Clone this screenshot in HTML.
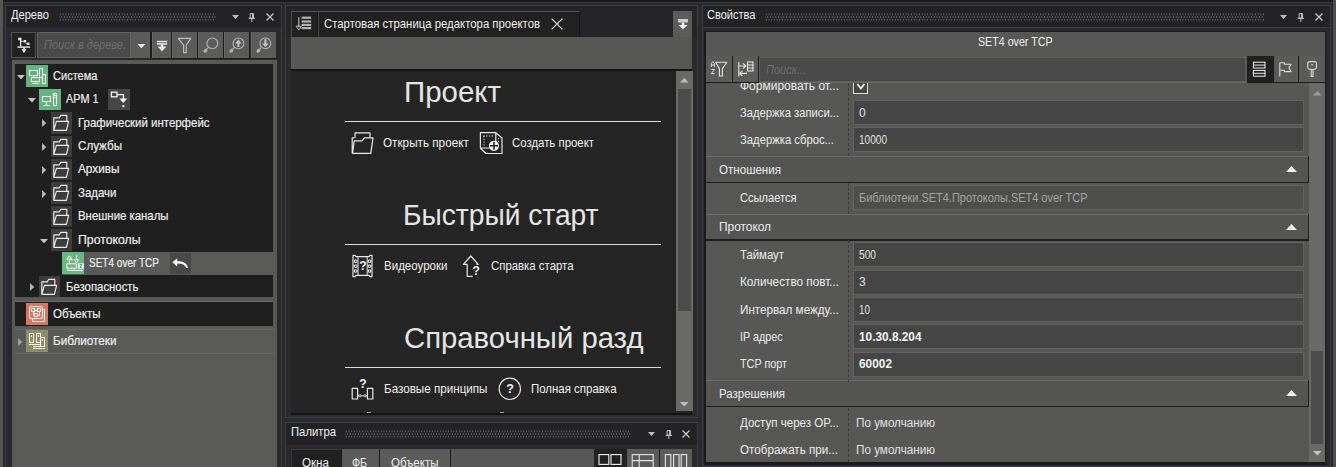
<!DOCTYPE html>
<html lang="ru"><head><meta charset="utf-8"><title>IDE</title>
<style>
html,body{margin:0;padding:0}
body{width:1336px;height:467px;overflow:hidden;background:#2a2a2e;position:relative;font-family:"Liberation Sans", sans-serif}
#r{position:absolute;left:0;top:0;width:1336px;height:467px;overflow:hidden}
#r div,#r span,#r svg{position:absolute;box-sizing:content-box}
.t{white-space:nowrap;font-family:"Liberation Sans", sans-serif;transform-origin:0 50%}
</style></head><body><div id="r">
<div style="left:0px;top:0px;width:1336px;height:2px;background:#1b1b1b;"></div>
<div style="left:0px;top:2px;width:1336px;height:1px;background:#38383e;"></div>
<div style="left:0px;top:0px;width:3px;height:467px;background:#555555;"></div>
<div style="left:1332.5px;top:0px;width:3.5px;height:467px;background:#4e4e4e;"></div>
<div style="left:5px;top:5px;width:275px;height:473px;border:1px solid #3e3e45;background:transparent"></div>
<div style="left:6px;top:6px;width:275px;height:21px;background:#232326;"></div>
<span class="t" style="left:11px;top:6px;font-size:13px;line-height:17px;color:#f0f0f0;font-weight:400;font-style:normal;transform:scaleX(0.8542)">Дерево</span>
<div style="left:59px;top:12.8px;width:157px;height:8px;background-image:radial-gradient(circle,#66666e 0.55px,transparent 0.95px),radial-gradient(circle,#66666e 0.55px,transparent 0.95px);background-size:2.7px 5.4px;background-position:0 -1.4px,1.35px 1.3px"></div>
<svg style="left:232px;top:15px" width="7" height="4" viewBox="0 0 7 4" ><path d="M0 0H7L3.5 4Z" fill="#bcbcbc"/></svg>
<svg style="left:248px;top:12.5px" width="8" height="9" viewBox="0 0 8 9" ><path d="M2.1 0.6H5.5V5.2H2.1Z M0.6 5.4H7 M3.8 5.4V9" stroke="#c4c4c4" stroke-width="1" fill="none"/><path d="M4.8 0.6V5.2" stroke="#c4c4c4" stroke-width="1.4"/></svg>
<svg style="left:266px;top:13px" width="8" height="8" viewBox="0 0 8 8" ><path d="M0.5 0.5L7.5 7.5M7.5 0.5L0.5 7.5" stroke="#c6c6c6" stroke-width="1.25" fill="none"/></svg>
<div style="left:11px;top:32px;width:23px;height:24px;border:1px solid #55554f;background:#222222"></div>
<svg style="left:11px;top:32px" width="25" height="26" viewBox="0 0 25 26" ><g fill="#ececec"><rect x="7.2" y="5.7" width="3.3" height="2.6"/><rect x="9" y="8" width="1.2" height="7"/><rect x="12.7" y="8" width="2.5" height="2.5"/><rect x="16.1" y="10.6" width="2.4" height="2.3"/><rect x="10" y="8.8" width="3" height="0.9"/><rect x="14.6" y="11.3" width="2" height="0.9"/><rect x="6.5" y="14.4" width="12.5" height="1.4"/><rect x="12.2" y="15.6" width="1.6" height="2"/><path d="M10.6 17.2H15.3L12.95 21.2Z"/></g></svg>
<div style="left:37px;top:32px;width:92px;height:24px;border:1px solid #62625e;background:#4a4a4a"></div>
<span class="t" style="left:44px;top:37px;font-size:12px;line-height:16px;color:#6e6e6e;font-weight:400;font-style:italic;transform:scaleX(0.9181)">Поиск в дереве.</span>
<div style="left:131px;top:32px;width:19px;height:26px;background:#5b5b59;"></div>
<svg style="left:137px;top:44px" width="9" height="5" viewBox="0 0 9 5" ><path d="M0.3 0H8.3L4.3 4.2Z" fill="#ececec"/></svg>
<div style="left:150px;top:32px;width:2px;height:26px;background:#1c1c1c;"></div>
<div style="left:152px;top:32px;width:18.5px;height:25.700000000000003px;background:#5b5b59;"></div>
<div style="left:152px;top:32px;width:1px;height:25.700000000000003px;background:#686866;"></div>
<div style="left:172px;top:32px;width:25px;height:25.700000000000003px;background:#5b5b59;"></div>
<div style="left:172px;top:32px;width:1px;height:25.700000000000003px;background:#686866;"></div>
<div style="left:198.3px;top:32px;width:24.69999999999999px;height:25.700000000000003px;background:#5b5b59;"></div>
<div style="left:198.3px;top:32px;width:1.0px;height:25.700000000000003px;background:#686866;"></div>
<div style="left:224.3px;top:32px;width:24.69999999999999px;height:25.700000000000003px;background:#5b5b59;"></div>
<div style="left:224.3px;top:32px;width:1.0px;height:25.700000000000003px;background:#686866;"></div>
<div style="left:250.5px;top:32px;width:25.5px;height:25.700000000000003px;background:#5b5b59;"></div>
<div style="left:250.5px;top:32px;width:1.0px;height:25.700000000000003px;background:#686866;"></div>
<div style="left:152px;top:57.7px;width:124px;height:0.8999999999999986px;background:#1c1c1c;"></div>
<div style="left:170.5px;top:32px;width:1.4000000000000057px;height:26px;background:#1c1c1c;"></div>
<div style="left:197px;top:32px;width:1.4000000000000057px;height:26px;background:#1c1c1c;"></div>
<div style="left:223px;top:32px;width:1.4000000000000057px;height:26px;background:#1c1c1c;"></div>
<div style="left:249px;top:32px;width:1.4000000000000057px;height:26px;background:#1c1c1c;"></div>
<svg style="left:152px;top:32px" width="19" height="26" viewBox="0 0 19 26" ><g fill="#f0f0f0"><rect x="4.8" y="8.8" width="10.4" height="1.5"/><rect x="4.8" y="11.2" width="10.4" height="1.5"/><rect x="8.8" y="12.5" width="2.4" height="2.5"/><path d="M5.6 14.4H14.4L10 19.2Z"/></g></svg>
<svg style="left:172px;top:32px" width="25" height="26" viewBox="0 0 25 26" ><path d="M6.2 6.4H18.8L14.2 13.2V20.6H11.6V13.2Z" fill="none" stroke="#c2c2c2" stroke-width="1.1" stroke-linejoin="round"/></svg>
<svg style="left:198.3px;top:32px" width="25" height="26" viewBox="0 0 25 26" ><g stroke="#b4b4b4" fill="none" stroke-width="1.1"><circle cx="14.4" cy="11.4" r="5.4"/><path d="M10.4 15.4L8 17.8"/></g><ellipse cx="7.4" cy="18.8" rx="2.1" ry="1.7" transform="rotate(-40 7.4 18.8)" fill="#b4b4b4"/></svg>
<svg style="left:224.3px;top:32px" width="25" height="26" viewBox="0 0 25 26" ><g stroke="#b4b4b4" fill="none" stroke-width="1.1"><circle cx="14.4" cy="11.4" r="5.4"/><path d="M10.4 15.4L8 17.8"/></g><ellipse cx="7.4" cy="18.8" rx="2.1" ry="1.7" transform="rotate(-40 7.4 18.8)" fill="#b4b4b4"/><path d="M14.4 7.6L17.6 11.4H15.4V15H13.4V11.4H11.2Z" fill="#c6c6c6"/></svg>
<svg style="left:250.5px;top:32px" width="25" height="26" viewBox="0 0 25 26" ><g stroke="#b4b4b4" fill="none" stroke-width="1.1"><circle cx="14.4" cy="11.4" r="5.4"/><path d="M10.4 15.4L8 17.8"/></g><ellipse cx="7.4" cy="18.8" rx="2.1" ry="1.7" transform="rotate(-40 7.4 18.8)" fill="#b4b4b4"/><path d="M14.4 15.2L17.6 11.4H15.4V7.2H13.4V11.4H11.2Z" fill="#c6c6c6"/></svg>
<div style="left:11.6px;top:60px;width:265.4px;height:407px;background:#595957;"></div>
<div style="left:14.8px;top:64px;width:258.2px;height:233px;background:#1f1f1f;"></div>
<svg style="left:16.5px;top:75px" width="8" height="4.4" viewBox="0 0 8 4.4" ><path d="M0 0H8L4 4.4Z" fill="#c4c4c4"/></svg>
<div style="left:26px;top:65px;width:22.200000000000003px;height:22px;background:#62b57e;"></div>
<svg style="left:26px;top:65px" width="22" height="22" viewBox="0 0 22 22" ><g stroke="#f4f4f4" fill="none" stroke-width="1" shape-rendering="crispEdges"><rect x="3.5" y="5.5" width="8" height="5"/><path d="M7.5 10.5V12.5"/><rect x="5.5" y="12.5" width="8" height="4"/><path d="M9.5 16.5V18.5 M6 18.5H13"/><rect x="13.5" y="3.5" width="3" height="9"/><rect x="16.5" y="9.5" width="3" height="9"/></g></svg>
<span class="t" style="left:52.5px;top:67px;font-size:13px;line-height:17px;color:#f0f0f0;font-weight:400;font-style:normal;transform:scaleX(0.8499);-webkit-text-stroke:0.18px #f0f0f0">Система</span>
<svg style="left:28.3px;top:98.4px" width="8" height="4.4" viewBox="0 0 8 4.4" ><path d="M0 0H8L4 4.4Z" fill="#c4c4c4"/></svg>
<div style="left:39.2px;top:88.8px;width:21.599999999999994px;height:21.200000000000003px;background:#62b57e;"></div>
<svg style="left:39px;top:89px" width="22" height="22" viewBox="0 0 22 22" ><g stroke="#f4f4f4" fill="none" stroke-width="1" shape-rendering="crispEdges"><rect x="3.5" y="7.5" width="8" height="5"/><path d="M7.5 12.5V16.5 M4 16.5H11"/><rect x="14.5" y="4.5" width="3" height="12"/><path d="M15 6.5H17 M15 8.5H17"/></g></svg>
<span class="t" style="left:65.5px;top:90px;font-size:13px;line-height:17px;color:#f0f0f0;font-weight:400;font-style:normal;transform:scaleX(0.836);-webkit-text-stroke:0.18px #f0f0f0">АРМ 1</span>
<div style="left:108px;top:89px;width:22px;height:20.700000000000003px;background:#464646;"></div>
<svg style="left:108px;top:89px" width="22" height="21" viewBox="0 0 22 21" ><g fill="none" stroke="#f4f4f4" stroke-width="1.3"><rect x="3.4" y="3.2" width="5.6" height="4.6"/><path d="M9 5.6H15.4V10"/></g><path d="M11.4 9.6H19.2L15.3 14Z" fill="#f4f4f4"/><rect x="14.3" y="16.2" width="2" height="2" fill="#f4f4f4"/></svg>
<svg style="left:42px;top:119.3px" width="4.4" height="8" viewBox="0 0 4.4 8" ><path d="M0 0L4.4 4L0 8Z" fill="#b4b4b4"/></svg>
<div style="left:51px;top:112.1px;width:21px;height:21.5px;background:#3d3d3d;"></div>
<svg style="left:51px;top:112.1px" width="21" height="21.5" viewBox="0 0 21 21.5" ><path d="M2.8 18.3V5.8H8.4L9.6 3.4H15.8V9.2 M2.8 18.3L5.4 9.3H17.6L15.4 18.3Z" fill="none" stroke="#ececec" stroke-width="1.15" stroke-linejoin="round"/></svg>
<span class="t" style="left:77.5px;top:114px;font-size:13px;line-height:17px;color:#f0f0f0;font-weight:400;font-style:normal;transform:scaleX(0.8799);-webkit-text-stroke:0.18px #f0f0f0">Графический интерфейс</span>
<svg style="left:42px;top:142.72px" width="4.4" height="8" viewBox="0 0 4.4 8" ><path d="M0 0L4.4 4L0 8Z" fill="#b4b4b4"/></svg>
<div style="left:51px;top:135.52px;width:21px;height:21.5px;background:#3d3d3d;"></div>
<svg style="left:51px;top:135.52px" width="21" height="21.5" viewBox="0 0 21 21.5" ><path d="M2.8 18.3V5.8H8.4L9.6 3.4H15.8V9.2 M2.8 18.3L5.4 9.3H17.6L15.4 18.3Z" fill="none" stroke="#ececec" stroke-width="1.15" stroke-linejoin="round"/></svg>
<span class="t" style="left:77.5px;top:137px;font-size:13px;line-height:17px;color:#f0f0f0;font-weight:400;font-style:normal;transform:scaleX(0.8931);-webkit-text-stroke:0.18px #f0f0f0">Службы</span>
<svg style="left:42px;top:166.14px" width="4.4" height="8" viewBox="0 0 4.4 8" ><path d="M0 0L4.4 4L0 8Z" fill="#b4b4b4"/></svg>
<div style="left:51px;top:158.94px;width:21px;height:21.5px;background:#3d3d3d;"></div>
<svg style="left:51px;top:158.94px" width="21" height="21.5" viewBox="0 0 21 21.5" ><path d="M2.8 18.3V5.8H8.4L9.6 3.4H15.8V9.2 M2.8 18.3L5.4 9.3H17.6L15.4 18.3Z" fill="none" stroke="#ececec" stroke-width="1.15" stroke-linejoin="round"/></svg>
<span class="t" style="left:77.5px;top:160px;font-size:13px;line-height:17px;color:#f0f0f0;font-weight:400;font-style:normal;transform:scaleX(0.9065);-webkit-text-stroke:0.18px #f0f0f0">Архивы</span>
<svg style="left:42px;top:189.56px" width="4.4" height="8" viewBox="0 0 4.4 8" ><path d="M0 0L4.4 4L0 8Z" fill="#b4b4b4"/></svg>
<div style="left:51px;top:182.36px;width:21px;height:21.5px;background:#3d3d3d;"></div>
<svg style="left:51px;top:182.36px" width="21" height="21.5" viewBox="0 0 21 21.5" ><path d="M2.8 18.3V5.8H8.4L9.6 3.4H15.8V9.2 M2.8 18.3L5.4 9.3H17.6L15.4 18.3Z" fill="none" stroke="#ececec" stroke-width="1.15" stroke-linejoin="round"/></svg>
<span class="t" style="left:77.5px;top:184px;font-size:13px;line-height:17px;color:#f0f0f0;font-weight:400;font-style:normal;transform:scaleX(0.8819);-webkit-text-stroke:0.18px #f0f0f0">Задачи</span>
<div style="left:51px;top:205.78000000000003px;width:21px;height:21.5px;background:#3d3d3d;"></div>
<svg style="left:51px;top:205.78000000000003px" width="21" height="21.5" viewBox="0 0 21 21.5" ><path d="M2.8 18.3V5.8H8.4L9.6 3.4H15.8V9.2 M2.8 18.3L5.4 9.3H17.6L15.4 18.3Z" fill="none" stroke="#ececec" stroke-width="1.15" stroke-linejoin="round"/></svg>
<span class="t" style="left:77.5px;top:207px;font-size:13px;line-height:17px;color:#f0f0f0;font-weight:400;font-style:normal;transform:scaleX(0.8757);-webkit-text-stroke:0.18px #f0f0f0">Внешние каналы</span>
<svg style="left:40.4px;top:238.9px" width="8" height="4.4" viewBox="0 0 8 4.4" ><path d="M0 0H8L4 4.4Z" fill="#c4c4c4"/></svg>
<div style="left:51px;top:229.20000000000002px;width:21px;height:21.5px;background:#3d3d3d;"></div>
<svg style="left:51px;top:229.20000000000002px" width="21" height="21.5" viewBox="0 0 21 21.5" ><path d="M2.8 18.3V5.8H8.4L9.6 3.4H15.8V9.2 M2.8 18.3L5.4 9.3H17.6L15.4 18.3Z" fill="none" stroke="#ececec" stroke-width="1.15" stroke-linejoin="round"/></svg>
<span class="t" style="left:77.5px;top:231px;font-size:13px;line-height:17px;color:#f0f0f0;font-weight:400;font-style:normal;transform:scaleX(0.9432);-webkit-text-stroke:0.18px #f0f0f0">Протоколы</span>
<div style="left:62px;top:252px;width:211px;height:22.69999999999999px;background:#5a5a58;"></div>
<div style="left:62px;top:252.2px;width:22px;height:22.0px;background:#68b984;"></div>
<svg style="left:62px;top:252.2px" width="22" height="22" viewBox="0 0 22 22" ><g stroke="#f4f4f4" fill="none" stroke-width="1"><path d="M4.8 7.2L7.4 3.8L10 7.2Z M7.4 7.2V11.5"/><path d="M14.6 3.4V7.8 M12.6 7.8H16.6L14.6 11Z"/><path d="M8.4 7.8H12.4" stroke-dasharray="1 1"/><path d="M4.8 11.8H14.4V16.2H4.8Z M6 16.2V17.8 M9 16.2V17.8 M12 16.2V17.8"/><path d="M5 18.5H21"/></g><rect x="16" y="11.4" width="6" height="5.4" fill="#f4f4f4"/><path d="M17.6 12.6H20L17.8 15.4H20.2" stroke="#4a8a62" fill="none" stroke-width="0.9"/></svg>
<span class="t" style="left:89px;top:254px;font-size:13px;line-height:17px;color:#f0f0f0;font-weight:400;font-style:normal;transform:scaleX(0.771);-webkit-text-stroke:0.18px #f0f0f0">SET4 over TCP</span>
<div style="left:170px;top:253px;width:21px;height:20.69999999999999px;background:#484848;"></div>
<svg style="left:170px;top:253px" width="21" height="21" viewBox="0 0 21 21" ><path d="M2.4 9.3L7.2 5.2V8.2C12.5 8 16.6 9.4 18.2 15H16.2C15 11.8 12 10.5 7.2 10.6V13.4Z" fill="#f6f6f6"/></svg>
<svg style="left:30px;top:283.2px" width="4.4" height="8" viewBox="0 0 4.4 8" ><path d="M0 0L4.4 4L0 8Z" fill="#b4b4b4"/></svg>
<div style="left:39.2px;top:276.0px;width:21.299999999999997px;height:20.69999999999999px;background:#3d3d3d;"></div>
<svg style="left:39.2px;top:276.0px" width="21" height="21.5" viewBox="0 0 21 21.5" ><path d="M2.8 18.3V5.8H8.4L9.6 3.4H15.8V9.2 M2.8 18.3L5.4 9.3H17.6L15.4 18.3Z" fill="none" stroke="#ececec" stroke-width="1.15" stroke-linejoin="round"/></svg>
<span class="t" style="left:65.5px;top:278px;font-size:13px;line-height:17px;color:#f0f0f0;font-weight:400;font-style:normal;transform:scaleX(0.8742);-webkit-text-stroke:0.18px #f0f0f0">Безопасность</span>
<div style="left:14.5px;top:301px;width:258.5px;height:1px;background:#6b6b69;"></div>
<div style="left:14.5px;top:302px;width:258.5px;height:23.5px;background:#1f1f1f;"></div>
<div style="left:26px;top:303px;width:22.200000000000003px;height:21.600000000000023px;background:#db7563;"></div>
<svg style="left:26px;top:303px" width="22" height="22" viewBox="0 0 22 22" ><g stroke="#f4f4f4" fill="none" stroke-width="1"><rect x="3.5" y="3.5" width="13" height="12" rx="1.5"/><path d="M16.5 6.5H18.5V18.5H6.5V15.5"/><g shape-rendering="crispEdges"><rect x="5.5" y="5.5" width="3" height="3"/><rect x="11.5" y="5.5" width="3" height="3"/><rect x="8.5" y="10.5" width="3" height="3"/><path d="M8.5 7H11.5 M7 8.5V12H8.5 M13 8.5V12H11.5"/></g></g></svg>
<span class="t" style="left:52.5px;top:305px;font-size:13px;line-height:17px;color:#f0f0f0;font-weight:400;font-style:normal;transform:scaleX(0.8858);-webkit-text-stroke:0.18px #f0f0f0">Объекты</span>
<div style="left:14.5px;top:329px;width:258.5px;height:1px;background:#6b6b69;"></div>
<div style="left:14.5px;top:353px;width:258.5px;height:1px;background:#6b6b69;"></div>
<svg style="left:18.4px;top:337.6px" width="4.4" height="8" viewBox="0 0 4.4 8" ><path d="M0 0L4.4 4L0 8Z" fill="#9c9c9c"/></svg>
<div style="left:26px;top:330.4px;width:22.200000000000003px;height:21.600000000000023px;background:#8e8f68;"></div>
<svg style="left:26px;top:330px" width="22" height="22" viewBox="0 0 22 22" ><g stroke="#f4f4f4" fill="none" stroke-width="1" shape-rendering="crispEdges"><rect x="3.5" y="3.5" width="4" height="9"/><rect x="10.5" y="3.5" width="4" height="9"/><rect x="14.5" y="7.5" width="4" height="9"/><path d="M5.5 5V7 M12.5 5V7 M16.5 9V11 M3 14.5H14.5 M7 16.5H14.5 M7 18.5H19"/></g></svg>
<span class="t" style="left:52.5px;top:332px;font-size:13px;line-height:17px;color:#f0f0f0;font-weight:400;font-style:normal;transform:scaleX(0.9015);-webkit-text-stroke:0.18px #f0f0f0">Библиотеки</span>
<div style="left:285px;top:5px;width:411px;height:411px;border:1px solid #3e3e45;background:transparent"></div>
<div style="left:286px;top:6px;width:411px;height:31px;background:#252528;"></div>
<div style="left:291px;top:11px;width:24.5px;height:25.5px;background:#212121;border-top:1px solid #555553;border-left:1px solid #4a4a48;border-right:1px solid #161616"></div>
<svg style="left:291px;top:11px" width="26" height="26" viewBox="0 0 26 26" ><g fill="#b4b4b4"><rect x="7.2" y="6.2" width="1.2" height="10"/><path d="M5 15.2H10.6L7.8 19Z" fill="none" stroke="#c2c2c2" stroke-width="1"/><rect x="10.6" y="5.6" width="9.6" height="2.2"/><rect x="10.6" y="9.4" width="9.6" height="2.2"/><rect x="10.6" y="12.8" width="9.6" height="2.2"/><rect x="10.6" y="16" width="9.6" height="2.2"/></g></svg>
<div style="left:317.5px;top:11px;width:260px;height:25.5px;background:#212121;border-top:1px solid #555553;border-left:1px solid #4a4a48;border-right:1px solid #161616"></div>
<span class="t" style="left:324px;top:15px;font-size:13px;line-height:17px;color:#f0f0f0;font-weight:400;font-style:normal;transform:scaleX(0.874)">Стартовая страница редактора проектов</span>
<svg style="left:551px;top:18px" width="12" height="12" viewBox="0 0 12 12" ><path d="M0.6 0.6L11.4 11.4M11.4 0.6L0.6 11.4" stroke="#dcdcdc" stroke-width="1.2" fill="none"/></svg>
<div style="left:673px;top:11px;width:19.299999999999955px;height:26px;background:#5b5b59;"></div>
<svg style="left:673px;top:11px" width="19" height="26" viewBox="0 0 19 26" ><rect x="5" y="8" width="10" height="3.4" fill="#cdcdcd"/><path d="M8.8 11.4H11.4V14H14.6L10.1 18.2L5.6 14H8.8Z" fill="#f4f4f4"/></svg>
<div style="left:291px;top:37px;width:401.29999999999995px;height:32px;background:#575755;"></div>
<div style="left:291px;top:69px;width:401.29999999999995px;height:1.5px;background:#161616;"></div>
<div style="left:291px;top:70.5px;width:401.29999999999995px;height:342.5px;background:#252525;"></div>
<div style="left:676.3px;top:70.7px;width:16.300000000000068px;height:340.8px;background:#6a6a68;"></div>
<div style="left:678.3px;top:89px;width:12.5px;height:222px;background:#4c4c4c;"></div>
<svg style="left:680.3px;top:78.2px" width="8.6" height="4.6" viewBox="0 0 8.6 4.6" ><path d="M0 4.6H8.6L4.3 0Z" fill="#bdbdbd"/></svg>
<svg style="left:680.3px;top:401.5px" width="8.6" height="4.6" viewBox="0 0 8.6 4.6" ><path d="M0 0H8.6L4.3 4.6Z" fill="#bdbdbd"/></svg>
<span class="t" style="left:404px;top:75px;font-size:28.8px;line-height:34px;color:#e6e6e6;font-weight:400;font-style:normal;transform:scaleX(1.0226)">Проект</span>
<div style="left:345px;top:121px;width:316px;height:1px;background:#dcdcdc;"></div>
<svg style="left:350px;top:130px" width="26" height="26" viewBox="0 0 26 26" ><g stroke="#e8e8e8" fill="none" stroke-width="1.2" stroke-linejoin="round"><path d="M5 8V2.8H20V7.6"/><path d="M2.2 23.4V7.8H4.4 M2.2 23.4H20.8L23 7.8H14.6L12 10.8H4.2L2.6 23.2"/></g></svg>
<span class="t" style="left:383.2px;top:134px;font-size:13px;line-height:17px;color:#f0f0f0;font-weight:400;font-style:normal;transform:scaleX(0.9014)">Открыть проект</span>
<svg style="left:478px;top:130px" width="26" height="26" viewBox="0 0 26 26" ><g stroke="#e8e8e8" fill="none" stroke-width="1.2" stroke-linejoin="round"><path d="M2.4 2.6H17.8V18H2.4Z M17.8 2.6L24 8V23.5H7.8L2.4 18"/><path d="M5.4 6H15 M6 6V15.5 M20.6 8V12" stroke-dasharray="1.2 1.6" stroke-width="1"/></g><circle cx="16" cy="15.8" r="5.1" fill="#f2f2f2"/><path d="M16 11.8V19.8M12 15.8H20" stroke="#222" stroke-width="1.5"/></svg>
<span class="t" style="left:511.5px;top:134px;font-size:13px;line-height:17px;color:#f0f0f0;font-weight:400;font-style:normal;transform:scaleX(0.8766)">Создать проект</span>
<span class="t" style="left:403.2px;top:198px;font-size:28.8px;line-height:34px;color:#e6e6e6;font-weight:400;font-style:normal;transform:scaleX(0.9783)">Быстрый старт</span>
<div style="left:345px;top:244px;width:316px;height:1px;background:#dcdcdc;"></div>
<svg style="left:351px;top:253px" width="24" height="26" viewBox="0 0 24 26" ><g stroke="#e8e8e8" fill="none" stroke-width="1.2" stroke-linejoin="round"><path d="M2 2.4H4L5 3.6H18L19 2.4H21V23.6H19L18 22.4H5L4 23.6H2Z"/><path d="M7 3.6V22.4M16.2 3.6V22.4" stroke-width="1"/><g stroke-width="1"><rect x="3.6" y="7" width="2.2" height="2.4"/><rect x="3.6" y="12" width="2.2" height="2.4"/><rect x="3.6" y="16.8" width="2.2" height="2.4"/><rect x="17.4" y="7" width="2.2" height="2.4"/><rect x="17.4" y="12" width="2.2" height="2.4"/><rect x="17.4" y="16.8" width="2.2" height="2.4"/></g></g></svg>
<span class="t" style="left:359.3px;top:257.8px;font-size:12px;line-height:17px;color:#f4f4f4;font-weight:700;font-style:normal;transform:scaleX(1)">?</span>
<span class="t" style="left:384px;top:257px;font-size:13px;line-height:17px;color:#f0f0f0;font-weight:400;font-style:normal;transform:scaleX(0.8868)">Видеоуроки</span>
<svg style="left:461px;top:253px" width="22" height="26" viewBox="0 0 22 26" ><g stroke="#e8e8e8" fill="none" stroke-width="1.2" stroke-linejoin="round"><path d="M11.6 23.4H6.2V11.4H2.4L9.8 3L17.2 11.4H15.4"/></g></svg>
<span class="t" style="left:472.4px;top:262.8px;font-size:12px;line-height:17px;color:#f4f4f4;font-weight:700;font-style:normal;transform:scaleX(1)">?</span>
<span class="t" style="left:491.3px;top:257px;font-size:13px;line-height:17px;color:#f0f0f0;font-weight:400;font-style:normal;transform:scaleX(0.8763)">Справка старта</span>
<span class="t" style="left:403.5px;top:321px;font-size:28.8px;line-height:34px;color:#e6e6e6;font-weight:400;font-style:normal;transform:scaleX(1.0167)">Справочный разд</span>
<div style="left:345px;top:367px;width:316px;height:1px;background:#dcdcdc;"></div>
<svg style="left:350px;top:376px" width="26" height="26" viewBox="0 0 26 26" ><g stroke="#e8e8e8" fill="none" stroke-width="1.2" stroke-linejoin="round"><rect x="2.2" y="12.4" width="5.4" height="10.6"/><rect x="17.4" y="12.4" width="5.4" height="10.6"/><g stroke-width="0.9"><circle cx="10" cy="19.8" r="1.1"/><circle cx="15" cy="19.8" r="1.1"/><path d="M7.6 19.8H8.9 M11.1 19.8H13.9 M16.1 19.8H17.4"/></g></g></svg>
<span class="t" style="left:359.3px;top:376.0px;font-size:12px;line-height:17px;color:#f4f4f4;font-weight:700;font-style:normal;transform:scaleX(1)">?</span>
<span class="t" style="left:384px;top:380px;font-size:13px;line-height:17px;color:#f0f0f0;font-weight:400;font-style:normal;transform:scaleX(0.8956)">Базовые принципы</span>
<svg style="left:498px;top:377.2px" width="24" height="24" viewBox="0 0 24 24" ><circle cx="11.8" cy="11.8" r="10.7" stroke="#dedede" fill="none" stroke-width="1.2"/></svg>
<span class="t" style="left:506.2px;top:380.0px;font-size:12.5px;line-height:18px;color:#f4f4f4;font-weight:700;font-style:normal;transform:scaleX(1)">?</span>
<span class="t" style="left:531px;top:380px;font-size:13px;line-height:17px;color:#f0f0f0;font-weight:400;font-style:normal;transform:scaleX(0.881)">Полная справка</span>
<div style="left:366.8px;top:411.6px;width:4.0px;height:1.0px;background:#a0a0a0;"></div>
<div style="left:500.4px;top:411.6px;width:4.0px;height:1.0px;background:#a0a0a0;"></div>
<div style="left:291px;top:413px;width:401.29999999999995px;height:1.5px;background:#141414;"></div>
<div style="left:285px;top:422px;width:411px;height:56px;border:1px solid #3e3e45;background:transparent"></div>
<div style="left:286px;top:423px;width:411px;height:21.5px;background:#232326;"></div>
<span class="t" style="left:290.5px;top:423px;font-size:13px;line-height:17px;color:#f0f0f0;font-weight:400;font-style:normal;transform:scaleX(0.868)">Палитра</span>
<div style="left:345px;top:430px;width:286px;height:8px;background-image:radial-gradient(circle,#66666e 0.55px,transparent 0.95px),radial-gradient(circle,#66666e 0.55px,transparent 0.95px);background-size:2.7px 5.4px;background-position:0 -1.4px,1.35px 1.3px"></div>
<svg style="left:648px;top:432px" width="7" height="4" viewBox="0 0 7 4" ><path d="M0 0H7L3.5 4Z" fill="#bcbcbc"/></svg>
<svg style="left:664.5px;top:429.5px" width="8" height="9" viewBox="0 0 8 9" ><path d="M2.1 0.6H5.5V5.2H2.1Z M0.6 5.4H7 M3.8 5.4V9" stroke="#c4c4c4" stroke-width="1" fill="none"/><path d="M4.8 0.6V5.2" stroke="#c4c4c4" stroke-width="1.4"/></svg>
<svg style="left:682px;top:430px" width="8" height="8" viewBox="0 0 8 8" ><path d="M0.5 0.5L7.5 7.5M7.5 0.5L0.5 7.5" stroke="#c6c6c6" stroke-width="1.25" fill="none"/></svg>
<div style="left:291px;top:449.3px;width:401.29999999999995px;height:17.69999999999999px;background:#575755;"></div>
<div style="left:291px;top:449.3px;width:49.5px;height:17.69999999999999px;background:#212121;"></div>
<div style="left:291px;top:449.3px;width:49.5px;height:1.0px;background:#3c3c3c;"></div>
<div style="left:291px;top:449.3px;width:1px;height:17.69999999999999px;background:#383838;"></div>
<div style="left:341.3px;top:449.3px;width:37.69999999999999px;height:17.69999999999999px;background:#5b5b59;"></div>
<div style="left:380px;top:449.3px;width:70.30000000000001px;height:17.69999999999999px;background:#5b5b59;"></div>
<div style="left:340.5px;top:449.3px;width:0.8000000000000114px;height:17.69999999999999px;background:#1c1c1c;"></div>
<div style="left:379px;top:449.3px;width:1px;height:17.69999999999999px;background:#1c1c1c;"></div>
<div style="left:450.3px;top:449.3px;width:1.0px;height:17.69999999999999px;background:#1c1c1c;"></div>
<span class="t" style="left:302px;top:454px;font-size:13px;line-height:17px;color:#f0f0f0;font-weight:400;font-style:normal;transform:scaleX(0.8935)">Окна</span>
<span class="t" style="left:352px;top:454px;font-size:13px;line-height:17px;color:#f0f0f0;font-weight:400;font-style:normal;transform:scaleX(0.8142)">ФБ</span>
<span class="t" style="left:391px;top:454px;font-size:13px;line-height:17px;color:#f0f0f0;font-weight:400;font-style:normal;transform:scaleX(0.8858)">Объекты</span>
<div style="left:594.2px;top:449.3px;width:31.799999999999955px;height:17.69999999999999px;background:#212121;"></div>
<svg style="left:594.2px;top:449.3px" width="32" height="18" viewBox="0 0 32 18" ><g stroke="#f2f2f2" fill="none" stroke-width="1.1"><rect x="5" y="5.6" width="9.8" height="9.8"/><rect x="17" y="5.6" width="10" height="9.8"/></g></svg>
<div style="left:626px;top:449.3px;width:1.2999999999999545px;height:17.69999999999999px;background:#1c1c1c;"></div>
<div style="left:627.3px;top:449.3px;width:31.700000000000045px;height:17.69999999999999px;background:#5b5b59;"></div>
<svg style="left:627.3px;top:449.3px" width="32" height="18" viewBox="0 0 32 18" ><g stroke="#e6e6e6" fill="none" stroke-width="1.1"><rect x="5.2" y="5.6" width="21" height="16"/><path d="M5.2 11.6H26.2 M12.2 5.6V20"/></g></svg>
<div style="left:659px;top:449.3px;width:1.2999999999999545px;height:17.69999999999999px;background:#1c1c1c;"></div>
<div style="left:660.3px;top:449.3px;width:32.0px;height:17.69999999999999px;background:#5b5b59;"></div>
<svg style="left:660.3px;top:449.3px" width="32" height="18" viewBox="0 0 32 18" ><g stroke="#e6e6e6" fill="none" stroke-width="1.1"><rect x="5.4" y="5.6" width="5.4" height="16"/><rect x="13.6" y="5.6" width="5.4" height="16"/><rect x="21.2" y="5.6" width="5.4" height="16"/></g></svg>
<div style="left:702px;top:5px;width:626.5999999999999px;height:460px;border:1px solid #3e3e45;background:transparent"></div>
<div style="left:703px;top:6px;width:626.5999999999999px;height:21px;background:#232326;"></div>
<div style="left:703px;top:27px;width:626.5999999999999px;height:1px;background:#3a3a40;"></div>
<span class="t" style="left:707px;top:6px;font-size:13px;line-height:17px;color:#f0f0f0;font-weight:400;font-style:normal;transform:scaleX(0.8495)">Свойства</span>
<div style="left:765px;top:12.8px;width:499px;height:8px;background-image:radial-gradient(circle,#66666e 0.55px,transparent 0.95px),radial-gradient(circle,#66666e 0.55px,transparent 0.95px);background-size:2.7px 5.4px;background-position:0 -1.4px,1.35px 1.3px"></div>
<svg style="left:1280px;top:15px" width="7" height="4" viewBox="0 0 7 4" ><path d="M0 0H7L3.5 4Z" fill="#bcbcbc"/></svg>
<svg style="left:1297px;top:12.5px" width="8" height="9" viewBox="0 0 8 9" ><path d="M2.1 0.6H5.5V5.2H2.1Z M0.6 5.4H7 M3.8 5.4V9" stroke="#c4c4c4" stroke-width="1" fill="none"/><path d="M4.8 0.6V5.2" stroke="#c4c4c4" stroke-width="1.4"/></svg>
<svg style="left:1314.5px;top:13px" width="8" height="8" viewBox="0 0 8 8" ><path d="M0.5 0.5L7.5 7.5M7.5 0.5L0.5 7.5" stroke="#c6c6c6" stroke-width="1.25" fill="none"/></svg>
<div style="left:704px;top:31px;width:622px;height:434px;background:#1b1b1b;"></div>
<div style="left:706.3px;top:32px;width:618.7px;height:430px;background:#575755;"></div>
<span class="t" style="left:740.3px;top:78px;font-size:12px;line-height:16px;color:#ececec;font-weight:400;font-style:normal;transform:scaleX(0.9991)">Формировать от...</span>
<div style="left:852.5px;top:80px;width:13.700000000000045px;height:12px;border:1px solid #e0e0e0;background:#444"></div>
<svg style="left:852.5px;top:80px" width="16" height="14" viewBox="0 0 16 14" ><path d="M4.4 4L7.8 8.6L11.4 4" stroke="#f4f4f4" stroke-width="1.8" fill="none"/></svg>
<span class="t" style="left:740.3px;top:105px;font-size:12px;line-height:16px;color:#ececec;font-weight:400;font-style:normal;transform:scaleX(0.9348)">Задержка записи...</span>
<div style="left:852.5px;top:99.9px;width:449.5px;height:23.0px;border:1px solid #62625f;background:#454545"></div>
<span class="t" style="left:859px;top:105px;font-size:12px;line-height:16px;color:#e2e2e2;font-weight:400;font-style:normal;transform:scaleX(1)">0</span>
<span class="t" style="left:740.3px;top:132px;font-size:12px;line-height:16px;color:#ececec;font-weight:400;font-style:normal;transform:scaleX(0.9396)">Задержка сброс...</span>
<div style="left:852.5px;top:127.30000000000001px;width:449.5px;height:23.0px;border:1px solid #62625f;background:#454545"></div>
<span class="t" style="left:859px;top:132px;font-size:12px;line-height:16px;color:#e2e2e2;font-weight:400;font-style:normal;transform:scaleX(0.839)">10000</span>
<div style="left:706.3px;top:156.4px;width:602.2px;height:27.0px;background:#555553;"></div>
<div style="left:706.3px;top:156.4px;width:602.2px;height:1.0px;background:#6c6c6a;"></div>
<div style="left:706.3px;top:182.1px;width:602.2px;height:1.4000000000000057px;background:#1e1e1e;"></div>
<div style="left:1307.5px;top:156.4px;width:1.0px;height:27.0px;background:#1e1e1e;"></div>
<span class="t" style="left:719px;top:162px;font-size:12px;line-height:16px;color:#ececec;font-weight:400;font-style:normal;transform:scaleX(0.9647)">Отношения</span>
<svg style="left:1286px;top:166.4px" width="11" height="6" viewBox="0 0 11 6" ><path d="M0 6H11L5.5 0Z" fill="#f0f0f0"/></svg>
<span class="t" style="left:740.3px;top:190px;font-size:12px;line-height:16px;color:#ececec;font-weight:400;font-style:normal;transform:scaleX(0.9246)">Ссылается</span>
<div style="left:852.5px;top:184.7px;width:449.5px;height:23.0px;border:1px solid #62625f;background:#4e4e4c"></div>
<span class="t" style="left:859px;top:190px;font-size:12px;line-height:16px;color:#a4a4a4;font-weight:400;font-style:normal;transform:scaleX(0.9139)">Библиотеки.SET4.Протоколы.SET4 over TCP</span>
<div style="left:706.3px;top:213.6px;width:602.2px;height:27.0px;background:#555553;"></div>
<div style="left:706.3px;top:213.6px;width:602.2px;height:1.0px;background:#6c6c6a;"></div>
<div style="left:706.3px;top:239.29999999999998px;width:602.2px;height:1.4000000000000057px;background:#1e1e1e;"></div>
<div style="left:1307.5px;top:213.6px;width:1.0px;height:27.0px;background:#1e1e1e;"></div>
<span class="t" style="left:719px;top:219px;font-size:12px;line-height:16px;color:#ececec;font-weight:400;font-style:normal;transform:scaleX(0.9896)">Протокол</span>
<svg style="left:1286px;top:223.6px" width="11" height="6" viewBox="0 0 11 6" ><path d="M0 6H11L5.5 0Z" fill="#f0f0f0"/></svg>
<span class="t" style="left:740.3px;top:247px;font-size:12px;line-height:16px;color:#ececec;font-weight:400;font-style:normal;transform:scaleX(0.9472)">Таймаут</span>
<div style="left:852.5px;top:242.3px;width:449.5px;height:23.0px;border:1px solid #62625f;background:#454545"></div>
<span class="t" style="left:859px;top:247px;font-size:12px;line-height:16px;color:#e2e2e2;font-weight:400;font-style:normal;transform:scaleX(0.8487)">500</span>
<span class="t" style="left:740.3px;top:274px;font-size:12px;line-height:16px;color:#ececec;font-weight:400;font-style:normal;transform:scaleX(0.9779)">Количество повт...</span>
<div style="left:852.5px;top:269.65px;width:449.5px;height:23.0px;border:1px solid #62625f;background:#454545"></div>
<span class="t" style="left:859px;top:274px;font-size:12px;line-height:16px;color:#e2e2e2;font-weight:400;font-style:normal;transform:scaleX(1)">3</span>
<span class="t" style="left:740.3px;top:302px;font-size:12px;line-height:16px;color:#ececec;font-weight:400;font-style:normal;transform:scaleX(0.9721)">Интервал между...</span>
<div style="left:852.5px;top:297.0px;width:449.5px;height:23.0px;border:1px solid #62625f;background:#454545"></div>
<span class="t" style="left:859px;top:302px;font-size:12px;line-height:16px;color:#e2e2e2;font-weight:400;font-style:normal;transform:scaleX(0.8234)">10</span>
<span class="t" style="left:740.3px;top:329px;font-size:12px;line-height:16px;color:#ececec;font-weight:400;font-style:normal;transform:scaleX(0.8971)">IP адрес</span>
<div style="left:852.5px;top:324.4px;width:449.5px;height:23.0px;border:1px solid #62625f;background:#454545"></div>
<span class="t" style="left:859px;top:329px;font-size:12px;line-height:16px;color:#f4f4f4;font-weight:700;font-style:normal;transform:scaleX(0.9857)">10.30.8.204</span>
<span class="t" style="left:740.3px;top:356px;font-size:12px;line-height:16px;color:#ececec;font-weight:400;font-style:normal;transform:scaleX(0.9003)">TCP порт</span>
<div style="left:852.5px;top:351.75px;width:449.5px;height:23.0px;border:1px solid #62625f;background:#454545"></div>
<span class="t" style="left:859px;top:356px;font-size:12px;line-height:16px;color:#f4f4f4;font-weight:700;font-style:normal;transform:scaleX(0.9888)">60002</span>
<div style="left:706.3px;top:380.3px;width:602.2px;height:27.0px;background:#555553;"></div>
<div style="left:706.3px;top:380.3px;width:602.2px;height:1.0px;background:#6c6c6a;"></div>
<div style="left:706.3px;top:406.0px;width:602.2px;height:1.400000000000034px;background:#1e1e1e;"></div>
<div style="left:1307.5px;top:380.3px;width:1.0px;height:27.0px;background:#1e1e1e;"></div>
<span class="t" style="left:719px;top:386px;font-size:12px;line-height:16px;color:#ececec;font-weight:400;font-style:normal;transform:scaleX(0.9548)">Разрешения</span>
<svg style="left:1286px;top:390.3px" width="11" height="6" viewBox="0 0 11 6" ><path d="M0 6H11L5.5 0Z" fill="#f0f0f0"/></svg>
<span class="t" style="left:740.3px;top:415px;font-size:12px;line-height:16px;color:#ececec;font-weight:400;font-style:normal;transform:scaleX(0.9607)">Доступ через OP...</span>
<span class="t" style="left:856px;top:415px;font-size:12px;line-height:16px;color:#e2e2e2;font-weight:400;font-style:normal;transform:scaleX(0.9734)">По умолчанию</span>
<span class="t" style="left:740.3px;top:442px;font-size:12px;line-height:16px;color:#ececec;font-weight:400;font-style:normal;transform:scaleX(0.9703)">Отображать при...</span>
<span class="t" style="left:856px;top:442px;font-size:12px;line-height:16px;color:#e2e2e2;font-weight:400;font-style:normal;transform:scaleX(0.9734)">По умолчанию</span>
<div style="left:848.2px;top:83px;width:0;height:73px;border-left:1.2px dashed #3c3c3c"></div>
<div style="left:848.2px;top:183px;width:0;height:30.5px;border-left:1.2px dashed #3c3c3c"></div>
<div style="left:848.2px;top:240px;width:0;height:141.5px;border-left:1.2px dashed #3c3c3c"></div>
<div style="left:848.2px;top:408px;width:0;height:54px;border-left:1.2px dashed #3c3c3c"></div>
<div style="left:706.3px;top:32px;width:618.7px;height:50.599999999999994px;background:#575755;"></div>
<div style="left:706.3px;top:82px;width:602.2px;height:1px;background:#6a6a68;"></div>
<span class="t" style="left:978.3px;top:34px;font-size:12px;line-height:16px;color:#f0f0f0;font-weight:400;font-style:normal;transform:scaleX(0.8889)">SET4 over TCP</span>
<div style="left:706.3px;top:56.4px;width:25.700000000000045px;height:25.6px;background:#5b5b59;"></div>
<div style="left:732px;top:56.4px;width:1.2000000000000455px;height:25.6px;background:#1c1c1c;"></div>
<div style="left:733.2px;top:56.4px;width:25.199999999999932px;height:25.6px;background:#5b5b59;"></div>
<div style="left:758.4px;top:56.4px;width:1.0px;height:25.6px;background:#1c1c1c;"></div>
<div style="left:706.3px;top:81.6px;width:53.10000000000002px;height:1.0px;background:#1c1c1c;"></div>
<svg style="left:706.3px;top:56.4px" width="26" height="26" viewBox="0 0 26 26" ><path d="M9.6 6.2H20.8L16.4 12.6V20H13.4V12.6Z" fill="none" stroke="#e4e4e4" stroke-width="1.1" stroke-linejoin="round"/><g fill="none" stroke="#e4e4e4" stroke-width="0.9"><path d="M5.4 11V7.4L6.9 5.6L8.4 7.4V11M5.4 9H8.4"/><path d="M5.4 13.4H8.4L5.4 17.6H8.6"/></g></svg>
<svg style="left:733.2px;top:56.4px" width="26" height="26" viewBox="0 0 26 26" ><g fill="none" stroke="#e4e4e4" stroke-width="1.1"><path d="M5.8 6V20.4"/><path d="M5.8 10H12 M10 7.4L12.8 10L10 12.6"/><path d="M14 17.4H7 M9.4 14.8L6.6 17.4L9.4 20"/><rect x="14.6" y="6" width="5.4" height="9"/><path d="M14.6 9H20 M14.6 12H20"/></g></svg>
<div style="left:759.4px;top:57.3px;width:484.6px;height:22.5px;border:1px solid #5e5e5c;background:#4a4a4a"></div>
<span class="t" style="left:766px;top:62px;font-size:12px;line-height:16px;color:#6e6e6e;font-weight:400;font-style:italic;transform:scaleX(0.9149)">Поиск...</span>
<div style="left:1246.7px;top:56.4px;width:26.299999999999955px;height:25.6px;background:#212121;"></div>
<svg style="left:1246.7px;top:56.4px" width="26" height="26" viewBox="0 0 26 26" ><g stroke="#f2f2f2" fill="none" stroke-width="1"><rect x="6.4" y="6.2" width="11.6" height="5.8"/><path d="M6.4 9.1H18"/><rect x="6.4" y="14.4" width="11.6" height="5.8"/><path d="M6.4 17.3H18"/></g></svg>
<div style="left:1273px;top:56.4px;width:25px;height:25.6px;background:#5b5b59;"></div>
<div style="left:1273px;top:56.4px;width:1px;height:25.6px;background:#1c1c1c;"></div>
<svg style="left:1273px;top:56.4px" width="26" height="26" viewBox="0 0 26 26" ><path d="M6.8 20.6V6.4 M6.8 6.8H11.4V8.2H18L16 11.8L18 15.6H11.4V14.2H6.8" stroke="#dcdcdc" fill="none" stroke-width="1.1" stroke-linejoin="round"/></svg>
<div style="left:1298px;top:56.4px;width:1px;height:25.6px;background:#1c1c1c;"></div>
<div style="left:1299px;top:56.4px;width:26px;height:25.6px;background:#5b5b59;"></div>
<svg style="left:1299px;top:56.4px" width="26" height="26" viewBox="0 0 26 26" ><g stroke="#dcdcdc" fill="none" stroke-width="1.1"><rect x="8.8" y="5.6" width="8.6" height="7.6" rx="1.6"/><path d="M12.2 13.2V20.4H14V13.2"/><rect x="12.4" y="8" width="1.4" height="1.6" fill="#dcdcdc" stroke="none"/></g></svg>
<div style="left:1246.7px;top:81.6px;width:78.29999999999995px;height:1.0px;background:#1c1c1c;"></div>
<div style="left:1309px;top:83.4px;width:16px;height:378.6px;background:#6a6a68;"></div>
<div style="left:1311.3px;top:350.5px;width:11.700000000000045px;height:93.5px;background:#4c4c4c;"></div>
<svg style="left:1312.7px;top:91px" width="8.8" height="4.6" viewBox="0 0 8.8 4.6" ><path d="M0 4.6H8.8L4.4 0Z" fill="#9a9a9a"/></svg>
<svg style="left:1312.7px;top:451px" width="8.8" height="4.6" viewBox="0 0 8.8 4.6" ><path d="M0 0H8.8L4.4 4.6Z" fill="#c2c2c2"/></svg>
</div></body></html>
